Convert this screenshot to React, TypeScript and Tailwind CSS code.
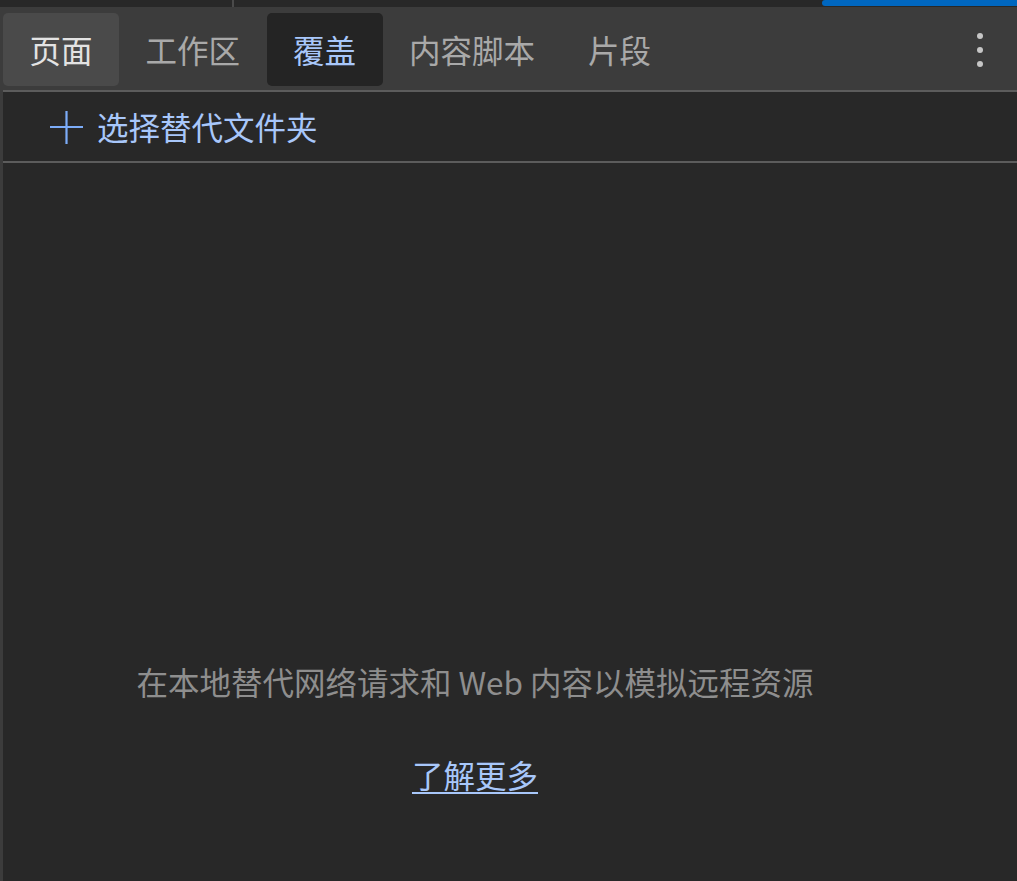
import React from "react";

const tabs = [
  { label: "页面", cls: "bg-[#4a4a4a] text-[#e3e3e3]" },
  { label: "工作区", cls: "text-[#a9a9a9]" },
  { label: "覆盖", cls: "bg-[#242424] text-[#a8c7fa]" },
  { label: "内容脚本", cls: "text-[#a9a9a9]" },
  { label: "片段", cls: "text-[#a9a9a9]" },
];

export default function App() {
  return (
    <div
      className="w-[1017px] h-[881px] bg-[#282828] flex flex-col overflow-hidden"
      style={{ fontFamily: '"Noto Sans CJK SC", "Noto Sans", sans-serif' }}
    >
      {/* top strip */}
      <div className="h-[7px] flex shrink-0 bg-[#282828]">
        <div className="w-[232px]" />
        <div className="w-[2px] bg-[#4a4a4a]" />
        <div className="flex-1" />
        <div className="w-[195px] h-[6px] bg-[#0067c0] rounded-l-[4px]" />
      </div>

      <div className="flex-1 flex flex-col border-l-[3px] border-[#3c3c3c]">
        {/* tab bar */}
        <div className="bg-[#3c3c3c] pt-[6px] pb-[4px] border-b-2 border-[#5c5c5c] flex items-center shrink-0">
          {tabs.map((t) => (
            <div
              key={t.label}
              className={`h-[73px] px-[26.5px] flex items-center rounded-[5px] text-[31.5px] leading-none ${t.cls}`}
            >
              {t.label}
            </div>
          ))}
          <div className="flex-1" />
          <div className="w-[40px] flex flex-col items-center gap-[8px] mr-[17px]">
            <div className="w-[6px] h-[6px] rounded-full bg-[#c6c6c6]" />
            <div className="w-[6px] h-[6px] rounded-full bg-[#c6c6c6]" />
            <div className="w-[6px] h-[6px] rounded-full bg-[#c6c6c6]" />
          </div>
        </div>

        {/* toolbar */}
        <div className="h-[71px] border-b-2 border-[#5c5c5c] flex items-center pl-[45px] shrink-0">
          <svg width="36" height="36" viewBox="0 0 36 36" className="mr-[13px]">
            <path d="M2 18H35M18.5 2V35" stroke="#7cacf8" strokeWidth="2.2" fill="none" />
          </svg>
          <span className="text-[31.5px] leading-none text-[#a8c7fa]">选择替代文件夹</span>
        </div>

        {/* content */}
        <div className="flex-1 flex flex-col items-center pr-[70px] pt-[494px]">
          <div className="text-[31.5px] leading-[48px] text-[#8e8e8e]">
            在本地替代网络请求和 Web 内容以模拟远程资源
          </div>
          <a className="mt-[45px] text-[31.5px] leading-[48px] text-[#a8c7fa] underline underline-offset-[4px] decoration-2">
            了解更多
          </a>
        </div>
      </div>
    </div>
  );
}
